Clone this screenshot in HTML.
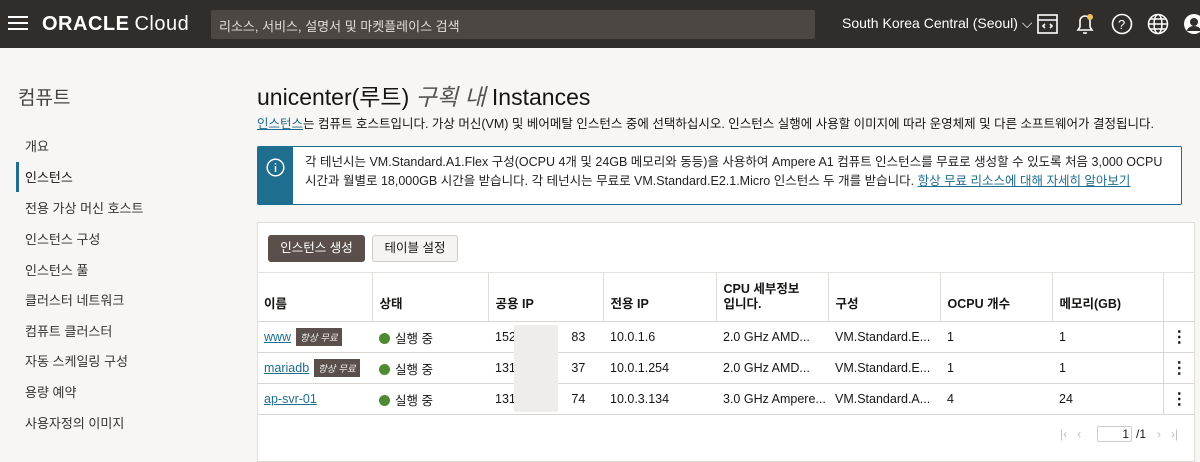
<!DOCTYPE html>
<html><head><meta charset="utf-8"><style>
*{box-sizing:border-box;margin:0;padding:0}
body{width:1200px;height:458px;overflow:hidden;background:#f7f6f4;font-family:"Liberation Sans","Noto Sans CJK KR",sans-serif;color:#161513;font-size:13px;position:relative}
.top{position:absolute;left:0;top:0;width:1200px;height:48px;background:#312d2a;color:#fff}
.abs{position:absolute}
.side div{position:absolute;left:25px;font-size:13px;color:#333}
a{color:#1f6d8f;text-decoration:underline}
table{border-collapse:collapse;position:absolute;left:257px;top:272px;width:938px;font-size:12.5px}
td,th{border-bottom:1px solid #d8d6d3;padding:0 0 0 7px;text-align:left;height:31px}
th{height:49px;font-weight:bold;border-right:1px solid #dedcd9;border-top:1px solid #e4e2df;vertical-align:middle;padding-top:10px}
.dot{display:inline-block;width:11px;height:11px;border-radius:50%;background:#4e8a2f;margin-right:5px;vertical-align:-1px}
.tag{display:inline-block;background:#5a4f4a;color:#eee;font-size:9.5px;padding:2px 4px;margin-left:5px;font-style:italic}
.k{text-align:center;font-weight:bold;font-size:16px;border-left:1px solid #d8d6d3;padding:0}
</style></head><body>
<div class="top">
 <div class="abs" style="left:8px;top:16px;width:20px;height:2px;background:#fff;box-shadow:0 6px 0 #fff,0 12px 0 #fff"></div>
 <div class="abs" style="left:42px;top:13px;font-size:20px;letter-spacing:.5px;font-weight:bold">ORACLE<span style="font-weight:normal;margin-left:5px">Cloud</span></div>
 <div class="abs" style="left:211px;top:10px;width:604px;height:29px;background:#4d4743;border-radius:2px;color:#e0dcd8;font-size:13px;padding:6px 8px">리소스, 서비스, 설명서 및 마켓플레이스 검색</div>
 <div class="abs" style="left:842px;top:15px;font-size:14px">South Korea Central (Seoul) ⌵</div>
 <svg class="abs" style="left:1036px;top:12px" width="24" height="24" fill="none" stroke="#fff" stroke-width="1.6"><rect x="2" y="3" width="19" height="18"/><path d="M2 8h19M9 12l-2 2 2 2M14 12l2 2-2 2"/></svg>
 <svg class="abs" style="left:1073px;top:11px" width="24" height="26" fill="none" stroke="#fff" stroke-width="1.6"><path d="M5 19h14l-2-3v-6a5 5 0 0 0-10 0v6zM10 22h4"/><circle cx="17" cy="6" r="3" fill="#f0c060" stroke="none"/></svg>
 <svg class="abs" style="left:1110px;top:12px" width="24" height="24" fill="none" stroke="#fff" stroke-width="1.6"><circle cx="12" cy="12" r="9.5"/><text x="8" y="17" fill="#fff" stroke="none" font-size="13" font-family="Liberation Sans">?</text></svg>
 <svg class="abs" style="left:1146px;top:12px" width="24" height="24" fill="none" stroke="#fff" stroke-width="1.5"><circle cx="12" cy="12" r="9.5"/><ellipse cx="12" cy="12" rx="4" ry="9.5"/><path d="M2.5 12h19M4 7h16M4 17h16"/></svg>
 <svg class="abs" style="left:1182px;top:12px" width="18" height="24"><circle cx="12" cy="12" r="10" fill="#fff"/><circle cx="12" cy="10" r="4" fill="#312d2a"/><path d="M5 19a7 5 0 0 1 14 0z" fill="#312d2a"/></svg>
</div>
<div class="side">
 <div style="left:18px;top:83px;font-size:19px;color:#444">컴퓨트</div>
 <div style="top:136px">개요</div>
 <div style="left:16px;top:162px;width:3px;height:30px;background:#1f6d8f"></div>
 <div style="top:167px;color:#161513">인스턴스</div>
 <div style="top:198px">전용 가상 머신 호스트</div>
 <div style="top:229px">인스턴스 구성</div>
 <div style="top:260px">인스턴스 풀</div>
 <div style="top:290px">클러스터 네트워크</div>
 <div style="top:321px">컴퓨트 클러스터</div>
 <div style="top:351px">자동 스케일링 구성</div>
 <div style="top:382px">용량 예약</div>
 <div style="top:413px">사용자정의 이미지</div>
</div>
<div class="abs" style="left:257px;top:78px;font-size:23px">unicenter(루트) <i style="color:#555">구획 내</i> Instances</div>
<div class="abs" style="left:257px;top:113px;font-size:12.5px"><a>인스턴스</a>는 컴퓨트 호스트입니다. 가상 머신(VM) 및 베어메탈 인스턴스 중에 선택하십시오. 인스턴스 실행에 사용할 이미지에 따라 운영체제 및 다른 소프트웨어가 결정됩니다.</div>
<div class="abs" style="left:257px;top:146px;width:925px;height:59px;background:#fff;border:1px solid #1f6d8f;border-radius:2px">
 <div class="abs" style="left:0;top:0;width:35px;height:57px;background:#1f6d8f"></div>
 <svg class="abs" style="left:8px;top:11px" width="19" height="19" fill="none" stroke="#fff" stroke-width="1.5"><circle cx="9.5" cy="9.5" r="8.3"/><path d="M9.5 8v6M9.5 5v1.5"/></svg>
 <div class="abs" style="left:47px;top:6px;font-size:12.5px;line-height:19px;color:#222">각 테넌시는 VM.Standard.A1.Flex 구성(OCPU 4개 및 24GB 메모리와 동등)을 사용하여 Ampere A1 컴퓨트 인스턴스를 무료로 생성할 수 있도록 처음 3,000 OCPU<br>시간과 월별로 18,000GB 시간을 받습니다. 각 테넌시는 무료로 VM.Standard.E2.1.Micro 인스턴스 두 개를 받습니다. <a>항상 무료 리소스에 대해 자세히 알아보기</a></div>
</div>
<div class="abs" style="left:257px;top:222px;width:938px;height:240px;background:#fff;border:1px solid #e0ded9"></div>
<div class="abs" style="left:268px;top:235px;width:97px;height:27px;background:#5a4f4a;color:#fff;border-radius:3px;font-size:12.5px;text-align:center;line-height:27px">인스턴스 생성</div>
<div class="abs" style="left:372px;top:235px;width:86px;height:27px;background:#f5f4f2;border:1px solid #cfcbc6;border-radius:3px;font-size:12.5px;text-align:center;line-height:25px">테이블 설정</div>
<table>
<tr><th style="width:115px">이름</th><th style="width:116px">상태</th><th style="width:115px">공용 IP</th><th style="width:113px">전용 IP</th><th style="width:112px;padding-top:0;line-height:15px">CPU 세부정보<br>입니다.</th><th style="width:112px">구성</th><th style="width:112px">OCPU 개수</th><th style="width:111px">메모리(GB)</th><th style="border-right:0"></th></tr>
<tr><td><a>www</a><span class="tag">항상 무료</span></td><td><span class="dot"></span>실행 중</td><td>152&nbsp;&nbsp;&nbsp;&nbsp;&nbsp;&nbsp;&nbsp;&nbsp;&nbsp;&nbsp;&nbsp;&nbsp;&nbsp;&nbsp;&nbsp;&nbsp;83</td><td>10.0.1.6</td><td>2.0 GHz AMD...</td><td>VM.Standard.E...</td><td>1</td><td>1</td><td class="k">⋮</td></tr>
<tr><td><a>mariadb</a><span class="tag">항상 무료</span></td><td><span class="dot"></span>실행 중</td><td>131&nbsp;&nbsp;&nbsp;&nbsp;&nbsp;&nbsp;&nbsp;&nbsp;&nbsp;&nbsp;&nbsp;&nbsp;&nbsp;&nbsp;&nbsp;&nbsp;37</td><td>10.0.1.254</td><td>2.0 GHz AMD...</td><td>VM.Standard.E...</td><td>1</td><td>1</td><td class="k">⋮</td></tr>
<tr><td><a>ap-svr-01</a></td><td><span class="dot"></span>실행 중</td><td>131&nbsp;&nbsp;&nbsp;&nbsp;&nbsp;&nbsp;&nbsp;&nbsp;&nbsp;&nbsp;&nbsp;&nbsp;&nbsp;&nbsp;&nbsp;&nbsp;74</td><td>10.0.3.134</td><td>3.0 GHz Ampere...</td><td>VM.Standard.A...</td><td>4</td><td>24</td><td class="k">⋮</td></tr>
</table>
<div class="abs" style="left:514px;top:325px;width:44px;height:87px;background:#eeedeb"></div>
<div class="abs" style="left:1060px;top:427px;color:#bbb;font-size:12px">|‹&nbsp;&nbsp;&nbsp;‹</div>
<div class="abs" style="left:1097px;top:426px;width:35px;height:16px;border:1px solid #ccc;border-radius:2px;font-size:12px;text-align:right;padding-right:2px">1</div>
<div class="abs" style="left:1136px;top:427px;font-size:12px">/1</div>
<div class="abs" style="left:1157px;top:427px;color:#bbb;font-size:12px">›&nbsp;&nbsp;&nbsp;›|</div>
</body></html>
